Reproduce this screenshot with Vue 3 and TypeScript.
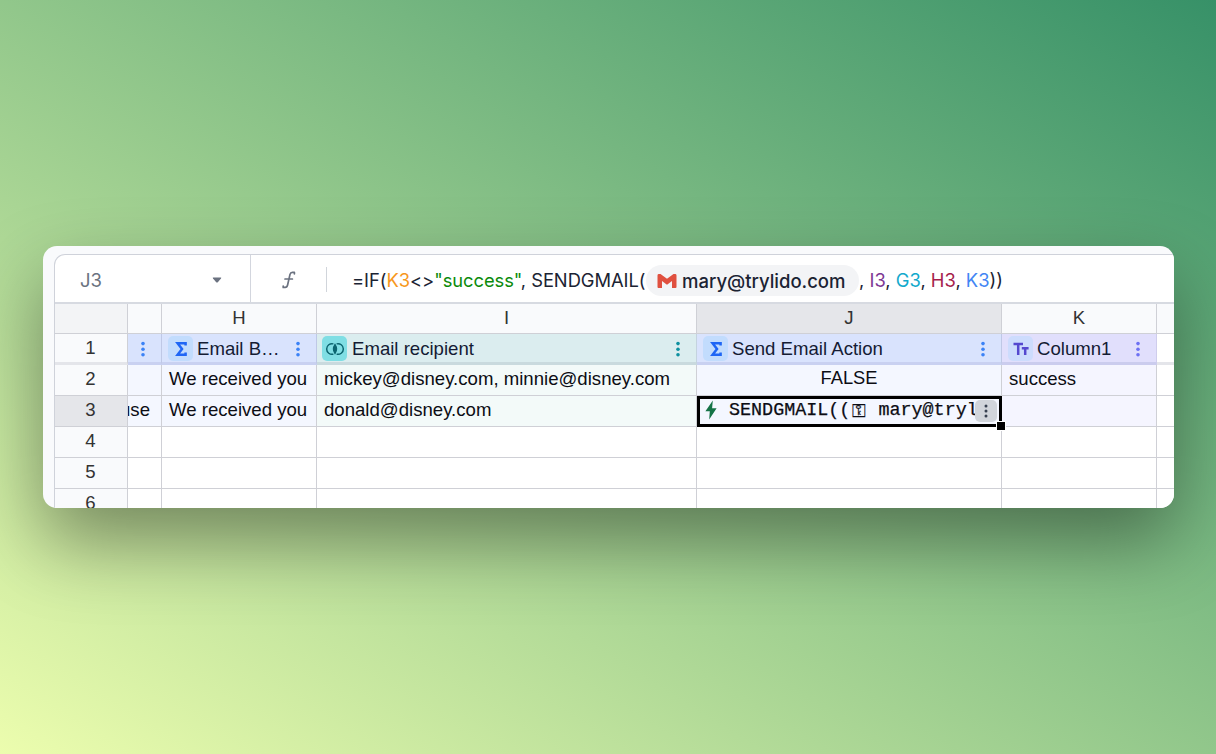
<template>
  <div class="backdrop">
    <div class="window">
      <div class="sheet">
        <div class="formula-bar">
          <div class="cell-name">
            <span>J3</span>
            <svg class="caret" width="10" height="6" viewBox="0 0 10 6">
              <path d="M1.4 0.5H8.6Q9.8 0.5 9 1.6L6 5Q5 6 4 5L1 1.6Q0.2 0.5 1.4 0.5Z" fill="#6b7280" />
            </svg>
          </div>
          <svg class="function-icon" width="16" height="20" viewBox="0 0 16 20">
            <path
              d="M13.4 3.8V2.4H11.4Q9.5 2.4 9 4.4L6.6 15Q6.1 17.4 4.2 17.4H2.2V16M4 9H11.4"
              fill="none"
              stroke="#6b7280"
              stroke-width="1.7"
              stroke-linejoin="round"
              stroke-linecap="round"
            />
          </svg>
          <span class="separator"></span>
          <div class="formula">
            <span class="formula-start">
              <span v-for="(token, i) in formulaStart" :key="i" :class="token.kind">{{ token.text }}</span>
            </span>
            <span class="account">
              <svg width="20" height="16" viewBox="0 0 20 16">
                <path d="M0.5 2.4Q0.5 1 1.9 1H3.5L10 5.8L16.5 1H18.1Q19.5 1 19.5 2.4V14Q19.5 15 18.5 15H15V8L10 11.8L5 8V15H1.5Q0.5 15 0.5 14Z" fill="#e0503f" />
              </svg>
              <span class="account-name">mary@trylido.com</span>
            </span>
            <span class="formula-end">
              <span v-for="(token, i) in formulaEnd" :key="i" :class="token.kind">{{ token.text }}</span>
            </span>
          </div>
        </div>

        <div class="grid">
          <div class="corner"></div>
          <div
            v-for="(letter, i) in letters"
            :key="i"
            class="letter"
            :class="{ active: letter === 'J' }"
          >
            {{ letter }}
          </div>

          <div class="row-number frozen">1</div>
          <div v-for="(field, i) in fields" :key="i" class="field frozen" :class="field.tone">
            <span v-if="field.icon" class="field-icon">
              <svg v-if="field.icon === 'sum'" width="12" height="16" viewBox="0 0 12 16">
                <path
                  d="M10.6 4.6V2.3H2.6L7 8L2.6 13.7H10.6V11.4"
                  fill="none"
                  stroke="#1f66f5"
                  stroke-width="2.5"
                />
              </svg>
              <svg v-else-if="field.icon === 'link'" width="20" height="14" viewBox="0 0 20 14">
                <path d="M10 2.6Q13 7 10 11.4Q7 7 10 2.6Z" fill="#0b6570" />
                <path
                  d="M8.4 1.9A5.3 5.3 0 1 0 8.4 12.1M11.6 1.9A5.3 5.3 0 1 1 11.6 12.1"
                  fill="none"
                  stroke="#0b6570"
                  stroke-width="1.5"
                />
                <path
                  d="M10 2.6Q13 7 10 11.4Q7 7 10 2.6Z"
                  fill="none"
                  stroke="#0b6570"
                  stroke-width="1.4"
                />
              </svg>
              <svg v-else width="16" height="14" viewBox="0 0 16 14">
                <path
                  d="M0.5 2H10M5.2 2V13M8.8 6.2H15.6M12.2 6.2V13"
                  fill="none"
                  stroke="#5548cf"
                  stroke-width="2.5"
                />
              </svg>
            </span>
            <span class="field-name">{{ field.name }}</span>
            <svg v-if="field.menu" class="dots" width="4" height="16" viewBox="0 0 4 16">
              <circle cx="2" cy="2.6" r="1.8" />
              <circle cx="2" cy="8.2" r="1.8" />
              <circle cx="2" cy="13.8" r="1.8" />
            </svg>
          </div>

          <template v-for="row in rows" :key="row.number">
            <div class="row-number" :class="{ active: row.number === 3 }">{{ row.number }}</div>
            <div
              v-for="(cell, i) in row.cells"
              :key="i"
              class="cell"
              :class="[row.number < 4 ? fields[i].tone : '', { centered: cell === 'FALSE', clipped: i === 0 }]"
            >
              <div v-if="row.number === 3 && i === 3" class="selection">
                <svg class="bolt" width="12" height="20" viewBox="0 0 12 20">
                  <path d="M7.8 0.6L0.4 11.2H4.8L4.2 19.4L11.6 8.2H7.1Z" fill="#157347" />
                </svg>
                <span class="action">SENDGMAIL((<span class="key">⚿</span> mary@trylido.com</span>
                <span class="action-menu">
                  <svg class="dots" width="4" height="14" viewBox="0 0 4 14">
                    <circle cx="2" cy="2" r="1.5" />
                    <circle cx="2" cy="7" r="1.5" />
                    <circle cx="2" cy="12" r="1.5" />
                  </svg>
                </span>
                <span class="handle"></span>
              </div>
              <template v-else>{{ cell }}</template>
            </div>
          </template>
        </div>
      </div>
    </div>
  </div>
</template>

<script setup lang="ts">
interface Token {
  text: string
  kind?: string
}

interface Field {
  name: string
  tone: string
  icon?: 'sum' | 'link' | 'text'
  menu: boolean
}

interface Row {
  number: number
  cells: string[]
}

const formulaStart: Token[] = [
  { text: '=IF(' },
  { text: 'K3', kind: 'orange' },
  { text: '<>' },
  { text: '"success"', kind: 'green' },
  { text: ', SENDGMAIL(' }
]

const formulaEnd: Token[] = [
  { text: ', ' },
  { text: 'I3', kind: 'purple' },
  { text: ', ' },
  { text: 'G3', kind: 'cyan' },
  { text: ', ' },
  { text: 'H3', kind: 'crimson' },
  { text: ', ' },
  { text: 'K3', kind: 'azure' },
  { text: '))' }
]

const letters = ['', 'H', 'I', 'J', 'K', '']

const fields: Field[] = [
  { name: '', tone: 'blue', menu: true },
  { name: 'Email B…', tone: 'blue', icon: 'sum', menu: true },
  { name: 'Email recipient', tone: 'teal', icon: 'link', menu: true },
  { name: 'Send Email Action', tone: 'blue', icon: 'sum', menu: true },
  { name: 'Column1', tone: 'violet', icon: 'text', menu: true },
  { name: '', tone: 'plain', menu: false }
]

const rows: Row[] = [
  {
    number: 2,
    cells: ['', 'We received you', 'mickey@disney.com, minnie@disney.com', 'FALSE', 'success', '']
  },
  { number: 3, cells: ['use', 'We received you', 'donald@disney.com', '', '', ''] },
  { number: 4, cells: ['', '', '', '', '', ''] },
  { number: 5, cells: ['', '', '', '', '', ''] },
  { number: 6, cells: ['', '', '', '', '', ''] }
]
</script>

<style>
body {
  margin: 0;
  overflow: hidden;
}
</style>

<style scoped>
.backdrop {
  box-sizing: border-box;
  width: 1216px;
  height: 754px;
  padding: 246px 0 0 43px;
  background: linear-gradient(to top right, #ecfdae, #379168);
  font-family: 'Liberation Sans', Arial, sans-serif;
}

.backdrop * {
  box-sizing: border-box;
}

.window {
  width: 1131px;
  height: 262px;
  padding: 8px 0 0 11px;
  border-radius: 14px;
  background: #f9fafc;
  box-shadow: 0 34px 76px rgba(0, 0, 0, 0.4);
  overflow: hidden;
}

.sheet {
  width: 1130px;
  height: 254px;
  border: 1px solid #cfd2da;
  border-width: 1px 0 0 1px;
  border-radius: 11px 0 0 0;
  background: white;
  overflow: hidden;
}

.formula-bar {
  display: flex;
  align-items: center;
  height: 49px;
  border-bottom: 2px solid #d7dae1;
  font-family: Inter, sans-serif;
}

.cell-name {
  display: flex;
  align-items: center;
  justify-content: space-between;
  width: 196px;
  height: 47px;
  padding: 2px 28px 0 25px;
  border-right: 1px solid #d3d6de;
  color: #6b7280;
  font-size: 18.5px;
}

.function-icon {
  margin: 2px 0 0 30px;
}

.separator {
  width: 1px;
  height: 25px;
  margin: 1px 25px 0 29px;
  background: #d1d5db;
}

.formula {
  display: flex;
  align-items: center;
  padding-top: 4px;
  color: #1b2333;
  font-size: 18.35px;
  line-height: 30px;
  white-space: pre;
}

.formula-start,
.formula-end {
  margin-top: -2px;
}

.formula-start {
  width: 294px;
  letter-spacing: -0.05px;
}

.account {
  display: flex;
  align-items: center;
  width: 213px;
  height: 31px;
  padding-left: 11px;
  border-radius: 16px;
  background: #f3f4f6;
}

.account-name {
  margin: 0 0 0 5px;
  font-weight: 500;
  font-size: 18.5px;
}

.orange {
  color: #f7981d;
}

.green {
  color: #0b8a0b;
}

.purple {
  color: #7e3794;
}

.cyan {
  color: #11a9cc;
}

.crimson {
  color: #a61d4c;
}

.azure {
  color: #4285f4;
}

.grid {
  display: grid;
  grid-template-columns: 73px 34px 155px 380px 305px 155px 28px;
  grid-template-rows: 30px repeat(6, 31px);
}

.grid > div {
  border-right: 1px solid #cfd0d6;
  border-bottom: 1px solid #cfd0d6;
}

.corner {
  background: #f3f4f6;
}

.letter,
.row-number {
  display: flex;
  align-items: center;
  justify-content: center;
  padding-bottom: 2px;
  background: #f9fafc;
  color: #333;
  font-size: 18.6px;
}

.row-number {
  padding-right: 1px;
}

.letter.active,
.row-number.active {
  background: #e5e6ea;
}

.grid > .frozen {
  border-bottom: 3px solid #e4e5ea;
}

.row-number.frozen {
  padding-bottom: 0;
}

.field {
  display: flex;
  align-items: center;
  padding: 0 16px 0 6px;
  color: #141b34;
  font-size: 18.6px;
}

.field-icon {
  display: flex;
  align-items: center;
  justify-content: center;
  width: 25px;
  height: 25px;
  margin: 1px 4px 0 0;
  border-radius: 5px;
  background: #c2dcfd;
}

.field.teal .field-icon {
  margin-left: -1px;
  margin-right: 5px;
  background: #80dee4;
}

.field-name {
  flex: 1;
  margin-top: 1px;
  white-space: nowrap;
}

.field .dots {
  margin-top: 2px;
}

.dots {
  flex-shrink: 0;
}

.grid > .field.blue {
  border-right-color: #bfc8e6;
  border-bottom-color: #c9d1f1;
  background: #d9e3fd;
  fill: #3b82f6;
}

.grid > .field.teal {
  border-right-color: #c4d3df;
  border-bottom-color: #c9dade;
  background: #dbedef;
  fill: #0e90a0;
}

.grid > .field.violet {
  border-right-color: #cfcdec;
  border-bottom-color: #cbccee;
  background: #e1dffc;
  fill: #6d70f3;
}

.violet .field-icon {
  background: #cddcfd;
}

.cell {
  display: flex;
  align-items: center;
  min-width: 0;
  padding: 0 7px 2px;
  color: #0c0d14;
  font-size: 18.6px;
  white-space: nowrap;
}

.cell.blue {
  background: #f4f7ff;
}

.cell.teal {
  background: #f3faf9;
}

.cell.violet {
  background: #f5f5ff;
}

.cell.centered {
  justify-content: center;
  padding-bottom: 5px;
  font-size: 18.3px;
}

.cell.clipped {
  justify-content: flex-end;
  padding-right: 11px;
  overflow: hidden;
}

.selection {
  position: relative;
  display: flex;
  flex-shrink: 0;
  align-items: center;
  width: 305px;
  height: 31px;
  margin: 2px 0 0 -7px;
  padding: 0 2px 0 5px;
  border: 3px solid black;
}

.bolt {
  flex-shrink: 0;
  margin-top: -2px;
}

.action {
  flex: 1;
  min-width: 0;
  margin-left: 12px;
  overflow: hidden;
  font-family: 'Liberation Mono', monospace;
  font-size: 18.4px;
  line-height: 24px;
  -webkit-text-stroke: 0.25px currentColor;
}

.key {
  display: inline-block;
  width: 17px;
  font-family: 'DejaVu Sans', sans-serif;
  font-size: 18px;
  line-height: 18px;
  text-align: center;
  vertical-align: -2px;
}

.action-menu {
  display: flex;
  flex-shrink: 0;
  align-items: center;
  justify-content: center;
  width: 22px;
  height: 22px;
  border-radius: 5px;
  background: #d1d5db;
  fill: #374151;
}

.handle {
  position: absolute;
  right: -7px;
  bottom: -7px;
  width: 10px;
  height: 10px;
  border: 1px solid white;
  background: black;
}
</style>
